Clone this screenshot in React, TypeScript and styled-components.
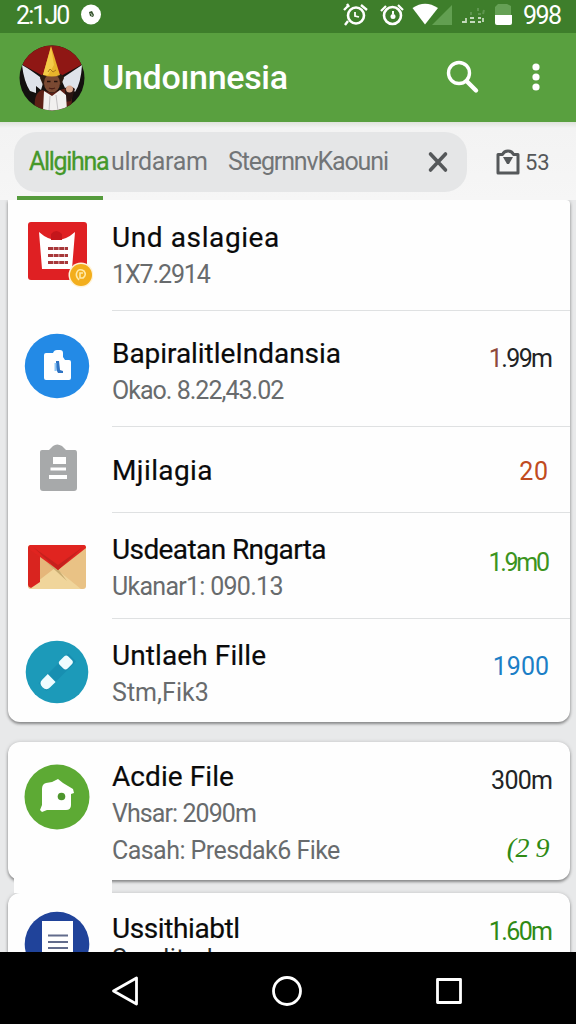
import React from 'react';
import styled, { createGlobalStyle } from 'styled-components';

const GlobalStyle = createGlobalStyle`
  * { box-sizing: border-box; }
  body {
    margin: 0;
    background: #e8e9ea;
    font-family: Roboto, 'Liberation Sans', sans-serif;
    overflow: hidden;
  }
`;

const Screen = styled.div`
  width: 576px;
  height: 1024px;
  display: flex;
  flex-direction: column;
  overflow: hidden;
`;

const StatusBar = styled.header`
  height: 33px;
  flex: none;
  display: flex;
  align-items: flex-start;
  padding: 0 14px 0 16px;
  color: #fff;
  background: #3e7e2b;
`;

const StatusText = styled.span<{ $track: number }>`
  font-size: 25px;
  line-height: 31px;
  letter-spacing: ${(p) => p.$track}px;
  white-space: nowrap;
`;

const StatusClock = styled.div`
  display: flex;
  width: 327px;
  gap: 12px;
`;

const StatusIcons = styled.div`
  display: flex;
  width: 180px;
  flex: none;
`;

const AppBar = styled.div`
  height: 89px;
  flex: none;
  display: flex;
  align-items: center;
  padding: 0 34px 0 19px;
  color: #fff;
  background: #59a03f;
`;

const AppTitle = styled.h1`
  flex: 1;
  margin: 0 0 2px 17px;
  font-size: 34px;
  font-weight: 500;
  line-height: 44px;
  letter-spacing: -0.3px;
`;

const AppActions = styled.div`
  display: flex;
  align-items: center;
  gap: 49px;
  padding-bottom: 2px;
`;

const FilterBar = styled.div`
  height: 78px;
  flex: none;
  display: flex;
  align-items: flex-start;
  padding: 10px 20px 0 14px;
  background: linear-gradient(#dfe3dc 0, #f3f3f3 6px, #f6f6f6 100%);
`;

const Pill = styled.div`
  width: 453px;
  height: 60px;
  display: flex;
  align-items: center;
  padding: 0 18px 0 15px;
  border-radius: 22px;
  background: #e5e6e7;
`;

const FilterText = styled.span<{ $width: number; $track: number; $active?: boolean }>`
  width: ${(p) => p.$width}px;
  flex: none;
  font-size: 25px;
  line-height: 60px;
  letter-spacing: ${(p) => p.$track}px;
  white-space: nowrap;
  color: ${(p) => (p.$active ? '#45982a' : '#727577')};
  -webkit-text-stroke: ${(p) => (p.$active ? '0.3px #45982a' : '0')};
`;

const PillClose = styled.div`
  flex: 1;
  display: flex;
  justify-content: flex-end;
`;

const Counter = styled.div`
  flex: 1;
  height: 60px;
  display: flex;
  align-items: center;
  gap: 4px;
  padding-left: 28px;
  font-size: 22px;
  color: #55585a;
`;

const TabIndicator = styled.div`
  position: absolute;
  left: 17px;
  top: -4px;
  width: 86px;
  height: 4px;
  background: #559b3c;
`;

const List = styled.main`
  position: relative;
  flex: 1;
  min-height: 0;
  padding: 0 6px 0 8px;
  background: #e8e9ea;
`;

const Viewport = styled.div`
  height: 752px;
  margin: 0 -6px 0 -8px;
  padding: 0 6px 0 8px;
  overflow: hidden;
`;

const Card = styled.section<{ $height: number; $flatTop?: boolean }>`
  height: ${(p) => p.$height}px;
  border-radius: ${(p) => (p.$flatTop ? '0 4px 12px 12px' : '12px')};
  background: #fefefe;
  box-shadow: 0 2px 3px rgba(0, 0, 0, 0.38), 0 0 4px rgba(0, 0, 0, 0.14);
`;

const Gap = styled.div`
  height: 20px;
`;

const Joint = styled.div`
  position: relative;
  width: 98px;
  height: 15px;
  margin: -2px 0 0 6px;
  background: #fefefe;
`;

const Row = styled.article<{ $height: number }>`
  height: ${(p) => p.$height}px;
  display: flex;
`;

const IconCell = styled.div<{ $top: number }>`
  width: 104px;
  flex: none;
  padding: ${(p) => p.$top}px 0 0 13px;
`;

const RowBody = styled.div<{ $top: number; $divider?: boolean }>`
  flex: 1;
  display: flex;
  justify-content: space-between;
  padding-top: ${(p) => p.$top}px;
  border-bottom: ${(p) => (p.$divider ? '1px solid #dfe1e2' : 'none')};
`;

const Copy = styled.div`
  display: flex;
  flex-direction: column;
`;

const Title = styled.h2<{ $track: number }>`
  margin: 0;
  font-size: 28px;
  font-weight: 400;
  line-height: 37px;
  letter-spacing: ${(p) => p.$track}px;
  white-space: nowrap;
  color: #0a0a0a;
  -webkit-text-stroke: 0.2px #0a0a0a;
`;

const Detail = styled.p<{ $track: number; $tight?: boolean }>`
  margin: ${(p) => (p.$tight ? '-7px' : '0')} 0 0;
  font-size: 25px;
  line-height: 37px;
  letter-spacing: ${(p) => p.$track}px;
  white-space: nowrap;
  color: ${(p) => (p.$tight ? '#2a2c2d' : '#686b6d')};
`;

const Amounts = styled.div<{ $top: number; $right: number }>`
  display: flex;
  flex-direction: column;
  align-items: flex-end;
  margin-top: ${(p) => p.$top}px;
  padding-right: ${(p) => p.$right}px;
`;

const Amount = styled.span<{ $color: string; $track: number }>`
  font-size: 25px;
  line-height: 37px;
  letter-spacing: ${(p) => p.$track}px;
  margin-right: ${(p) => -p.$track}px;
  white-space: nowrap;
  color: ${(p) => p.$color};
`;

const Lead = styled.span`
  color: #8e4a3c;
`;

const Scrawl = styled.span`
  margin: 33px 4px 0 0;
  font: italic 28px/32px 'Liberation Serif', serif;
  letter-spacing: -0.5px;
  color: #2f8a14;
`;

const NavBar = styled.nav`
  height: 72px;
  flex: none;
  display: flex;
  align-items: center;
  justify-content: space-between;
  padding: 5px 111px 0 109px;
  background: #000;
`;

const Glyph = ({ children }: { children: React.ReactNode }) => (
  <svg width="72" height="72" viewBox="0 0 72 72" display="block">
    {children}
  </svg>
);

const TicketIcon = () => (
  <Glyph>
    <rect x="7" y="6" width="59" height="58" rx="3" fill="#df2023" />
    <path d="M18 16Q27 24 36 24T54 16L51 53H21Z" fill="#fff" />
    <path d="M30 18Q35 12 41 18V24H30Z" fill="#c4161b" />
    <path d="M27 32.500h20M27 39.500h20M27 46.500h20" stroke="#a8383a" strokeWidth="3" strokeDasharray="5 0.600" />
    <circle cx="60" cy="59" r="12.500" fill="#fff3d8" />
    <circle cx="60" cy="59" r="11" fill="#f3ae1c" />
    <path d="M58 64Q54 60 56 56T63 55Q66 59 62 62H59V57H62" fill="none" stroke="#ffe9a6" strokeWidth="1.600" />
  </Glyph>
);

const FolderIcon = () => (
  <Glyph>
    <circle cx="36" cy="36" r="32.200" fill="#238ae6" />
    <path d="M25 23h7q1-3 4-3h3q3 0 3 3v4l2 3h4q2 0 2 2v16q0 2-2 2H25q-2 0-2-2V25q0-2 2-2Z" fill="#fff" />
    <path d="M35 31h3l1 9 3 1v2h-5q-2-3-2-6Z" fill="#2f74c4" />
    <path d="M33.500 33h2v8h-2z" fill="#8fc7f6" />
  </Glyph>
);

const ClipboardIcon = () => (
  <Glyph>
    <path d="M21 19h7l4-4q4-3 9 0l4 4h9q2 0 2 3v35q0 3-3 3H22q-3 0-3-3V21q0-2 2-2Z" fill="#a7a9aa" />
    <path d="M32 26h13v7H32zM29.500 36.500H45v3H29.500zM28 44h18v4H28z" fill="#fff" />
  </Glyph>
);

const MailIcon = () => (
  <Glyph>
    <rect x="7" y="14" width="58" height="44" rx="3" fill="#e9c285" />
    <path d="M19 26L37 39 19 53Z" fill="#e5b67a" />
    <path d="M8 57L34 37 60 58H10Z" fill="#f0d59b" />
    <path d="M7 17q0-3 3-3h9v37L10 57q-3-1-3-3Z" fill="#d9241f" />
    <path d="M25 31L46 50 37 38Z" fill="#c9ad72" />
    <path d="M9 14h54q2 0 2 3L37 39 8 18Z" fill="#e02420" />
    <path d="M12 16L37 34 62 16 37 39Z" fill="#c5211d" />
  </Glyph>
);

const PillIcon = () => (
  <Glyph>
    <circle cx="36" cy="36" r="31.300" fill="#1c9ab9" />
    <g transform="rotate(-45 36 36)">
      <rect x="15" y="31" width="42" height="11" fill="#178fb1" />
      <path d="M28 31H20q-5 0-5 5.500T20 42h8Z" fill="#eefcff" />
      <rect x="43" y="30" width="12" height="11" rx="3" fill="#eefcff" />
    </g>
  </Glyph>
);

const HomeIcon = () => (
  <Glyph>
    <circle cx="36" cy="36" r="32.500" fill="#5daa34" />
    <path d="M21 28q0-5 4-6l6-1 6-3 5 4 10 6 1 4-3 1v11q0 5-5 5H26l-5 2-2-2 2-5Z" fill="#fff" />
    <circle cx="40.500" cy="35.500" r="3.800" fill="#4e962d" />
  </Glyph>
);

const DocumentIcon = () => (
  <Glyph>
    <circle cx="36" cy="36" r="32.300" fill="#20439a" />
    <path d="M21 13h31v40H21z" fill="#fff" />
    <path d="M27 27.500h20M27 34h20M27 40h20" stroke="#626c8c" strokeWidth="2" />
  </Glyph>
);

const Avatar = () => (
  <svg width="66" height="66" viewBox="0 0 66 66" display="block">
    <defs>
      <clipPath id="avatar">
        <circle cx="33" cy="33" r="32.500" />
      </clipPath>
    </defs>
    <g clipPath="url(#avatar)">
      <rect width="66" height="66" fill="#14100f" />
      <path d="M4 0H62V20L42 31H24L4 20Z" fill="#8f1714" />
      <path d="M3 20Q12 25 25 35L22 45 17 41V48L11 46Q5 37 3 20Z" fill="#dfe3ea" />
      <path d="M63 20Q54 26 42 34L46 43 51 41 56 47Q62 38 63 20Z" fill="#dfe3ea" />
      <path d="M16 66Q14 48 23 45L33 48 44 44 54 42 52 66Z" fill="#5c2016" />
      <path d="M46 45Q53 40 56 44L52 56 46 57Z" fill="#2a1512" />
      <circle cx="50.500" cy="44" r="3.500" fill="#d9a78d" />
      <path d="M21 33Q21 28 33 28T45 33L42 40 24 40Z" fill="#2c1a10" />
      <ellipse cx="33" cy="38" rx="8" ry="9.500" fill="#7a4932" />
      <path d="M28 36.500h3.500M35 36.500h3.500" stroke="#24120c" strokeWidth="1.600" />
      <path d="M30 43q3 1.500 6 0" stroke="#4b1f17" strokeWidth="1.300" fill="none" />
      <path d="M25 46L33 51 41 45 47 50 48 66H24Z" fill="#f1f0ef" />
      <path d="M31 51L30 66M37 50L39 66" stroke="#c2c0c2" strokeWidth="1" />
      <path d="M32 1L41 30Q33 33 24 30Z" fill="#e8b32b" />
      <path d="M32 2L35 20 29 30H24Z" fill="#f4cb48" />
      <path d="M29 27l2-3 3 3 3-2" stroke="#a9761a" strokeWidth="1" fill="none" />
    </g>
  </svg>
);

const StatusGlyphs = () => (
  <svg width="180" height="33" viewBox="343 0 180 33" display="block">
    <g fill="none" stroke="#fff">
      <circle cx="356" cy="15.500" r="8" strokeWidth="2.600" />
      <path d="M344 10l5-5M347 4l2 3M361 5l6 5M348 21l-3 4" strokeWidth="2.400" />
      <path d="M355 12v4l4 1" strokeWidth="1.800" />
      <circle cx="392.500" cy="15.500" r="8.500" strokeWidth="2.600" />
      <path d="M381 11l5-5M398 5l5 5" strokeWidth="2.200" />
      <path d="M393 11v3" strokeWidth="2" />
    </g>
    <circle cx="393" cy="16.500" r="2.500" fill="#fff" />
    <path d="M452 5V25H432Z" fill="#629f51" />
    <path d="M412.500 8Q425-.5 438 8L425 24.500Z" fill="#fff" />
    <path d="M462 22h4M466 18v5M470 18h4M470 22h5M478 22h3M478 18h3M483 18v4" stroke="#c4dabd" strokeWidth="1.800" fill="none" />
    <path d="M471 12v3M478 8v3M478 14h3M484 10l-1 4" stroke="#5f9650" strokeWidth="2" />
    <path d="M495 7l3-3h9l4 2v9h-16Z" fill="#65a055" />
    <path d="M495 15h17v8q0 2-2 2h-13q-2 0-2-2Z" fill="#fff" />
  </svg>
);

type Entry = {
  icon: React.ReactNode;
  height: number;
  iconTop: number;
  top: number;
  title: [string, number];
  details: [string, number][];
  amount?: React.ReactNode;
  amountTop?: number;
  amountRight?: number;
  divider?: boolean;
  tight?: boolean;
};

const mainEntries: Entry[] = [
  {
    icon: <TicketIcon />, height: 111, iconTop: 16, top: 19, divider: true,
    title: ['Und aslagiea', 0.6], details: [['1X7.2914', -1.1]],
  },
  {
    icon: <FolderIcon />, height: 116, iconTop: 19, top: 24, divider: true,
    title: ['BapiralitleIndansia', -0.05], details: [['Okao. 8.22,43.02', -0.98]],
    amount: <Amount $color="#222426" $track={-1.6}><Lead>1</Lead>.99m</Amount>,
    amountTop: 5, amountRight: 17,
  },
  {
    icon: <ClipboardIcon />, height: 86, iconTop: 4, top: 25, divider: true,
    title: ['Mjilagia', 0.4], details: [],
    amount: <Amount $color="#c04a20" $track={0.6}>20</Amount>,
    amountTop: 1, amountRight: 22,
  },
  {
    icon: <MailIcon />, height: 106, iconTop: 18, top: 18, divider: true,
    title: ['Usdeatan Rngarta', -0.6], details: [['Ukanar1: 090.13', -0.72]],
    amount: <Amount $color="#3b9420" $track={-2.3}>1.9m0</Amount>,
    amountTop: 13, amountRight: 20,
  },
  {
    icon: <PillIcon />, height: 103, iconTop: 17, top: 18,
    title: ['Untlaeh Fille', 0.1], details: [['Stm,Fik3', 0.05]],
    amount: <Amount $color="#1c7fc6" $track={0}>1900</Amount>,
    amountTop: 11, amountRight: 21,
  },
];

const fileEntry: Entry = {
  icon: <HomeIcon />, height: 138, iconTop: 19, top: 16,
  title: ['Acdie File', 0.07],
  details: [['Vhsar: 2090m', -0.92], ['Casah: Presdak6 Fike', -0.55]],
  amount: (
    <>
      <Amount $color="#222426" $track={-0.7}>300m</Amount>
      <Scrawl>(2 9</Scrawl>
    </>
  ),
  amountTop: 4, amountRight: 17,
};

const lastEntry: Entry = {
  icon: <DocumentIcon />, height: 120, iconTop: 15, top: 17,
  title: ['Ussithiabtl', -0.4], details: [['Saerlitad', 0.3]], tight: true,
  amount: <Amount $color="#2f8a14" $track={-1.6}>1.60m</Amount>,
  amountTop: 3, amountRight: 17,
};

const EntryRow = ({ entry }: { entry: Entry }) => (
  <Row $height={entry.height}>
    <IconCell $top={entry.iconTop}>{entry.icon}</IconCell>
    <RowBody $top={entry.top} $divider={entry.divider}>
      <Copy>
        <Title $track={entry.title[1]}>{entry.title[0]}</Title>
        {entry.details.map(([text, track]) => (
          <Detail key={text} $track={track} $tight={entry.tight}>{text}</Detail>
        ))}
      </Copy>
      {entry.amount && (
        <Amounts $top={entry.amountTop ?? 0} $right={entry.amountRight ?? 0}>{entry.amount}</Amounts>
      )}
    </RowBody>
  </Row>
);

export default function App() {
  return (
    <Screen>
      <GlobalStyle />
      <StatusBar>
        <StatusClock>
          <StatusText $track={-1.9}>2:1J0</StatusText>
          <svg width="22" height="30" viewBox="0 0 22 30">
            <circle cx="10" cy="14.500" r="10" fill="#fff" />
            <path d="M8 12l3-1 2 4-1 2-3-1Z" fill="#33502b" />
            <path d="M9.500 13.500l1.500 1v1.500" stroke="#cfdccb" fill="none" />
          </svg>
        </StatusClock>
        <StatusIcons><StatusGlyphs /></StatusIcons>
        <StatusText $track={-1.5}>998</StatusText>
      </StatusBar>

      <AppBar>
        <Avatar />
        <AppTitle>Undoınnesia</AppTitle>
        <AppActions>
          <svg width="36" height="36" viewBox="0 0 36 36" fill="none" stroke="#fff">
            <circle cx="14" cy="14" r="10.500" strokeWidth="3.400" />
            <path d="M21.500 22L31 31.500" strokeWidth="4.400" strokeLinecap="round" />
          </svg>
          <svg width="12" height="30" viewBox="0 0 12 30" fill="#fff">
            <circle cx="6" cy="5" r="3.600" />
            <circle cx="6" cy="15" r="3.600" />
            <circle cx="6" cy="25" r="3.600" />
          </svg>
        </AppActions>
      </AppBar>

      <FilterBar>
        <Pill>
          <FilterText $width={82} $track={-1.3} $active>Allgihna</FilterText>
          <FilterText $width={117} $track={-0.34}>ulrdaram</FilterText>
          <FilterText $width={170} $track={-1.13}>StegrnnvKaouni</FilterText>
          <PillClose>
            <svg width="22" height="22" viewBox="0 0 22 22" stroke="#55585a" strokeWidth="3.600" strokeLinecap="round">
              <path d="M3.500 3L18.500 19M18.500 3L3.500 19" />
            </svg>
          </PillClose>
        </Pill>
        <Counter>
          <svg width="26" height="28" viewBox="0 0 26 28">
            <path d="M3 6.500H7.500Q9 3 13 3T18.500 6.500H23V25H3Z" fill="none" stroke="#55585a" strokeWidth="3" strokeLinejoin="round" />
            <path d="M8 9h10l-4 7h-2Z" fill="#55585a" />
          </svg>
          53
        </Counter>
      </FilterBar>

      <List>
        <TabIndicator />
        <Viewport>
          <Card $height={522} $flatTop>
            {mainEntries.map((entry) => (
              <EntryRow key={entry.title[0]} entry={entry} />
            ))}
          </Card>
          <Gap />
          <Card $height={138}>
            <EntryRow entry={fileEntry} />
          </Card>
          <Joint />
          <Card $height={130}>
            <EntryRow entry={lastEntry} />
          </Card>
        </Viewport>
      </List>

      <NavBar>
        <svg width="32" height="32" viewBox="0 0 32 32" fill="none" stroke="#fff" strokeWidth="2.800" strokeLinejoin="round">
          <path d="M4.500 16L27.500 3V29Z" />
        </svg>
        <svg width="32" height="32" viewBox="0 0 32 32" fill="none" stroke="#fff" strokeWidth="2.800">
          <circle cx="16" cy="16" r="13.500" />
        </svg>
        <svg width="32" height="32" viewBox="0 0 32 32" fill="none" stroke="#fff" strokeWidth="2.800" strokeLinejoin="round">
          <rect x="4.500" y="4.500" width="23" height="23" />
        </svg>
      </NavBar>
    </Screen>
  );
}
